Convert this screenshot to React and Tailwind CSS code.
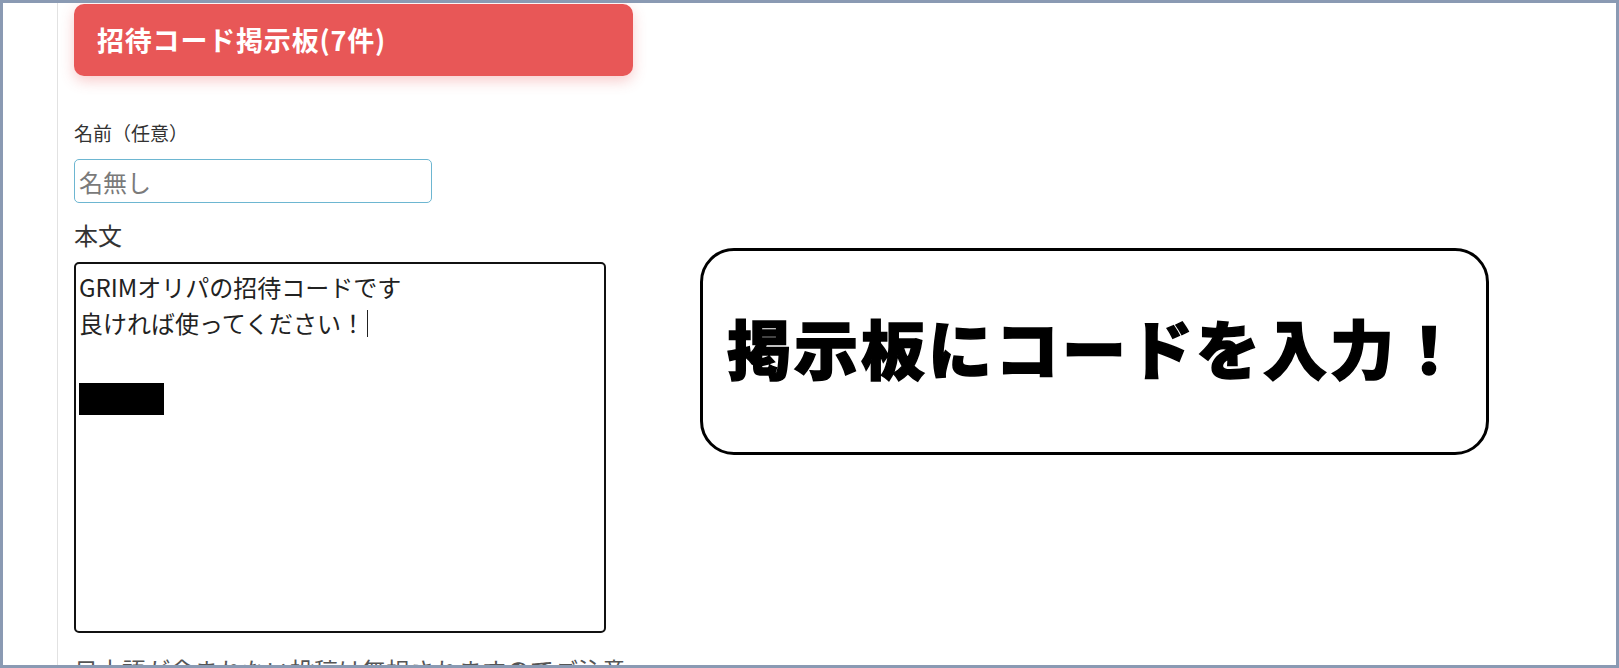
export default function App() {
  const jp = { fontFamily: '"Noto Sans CJK JP", "Noto Sans", sans-serif' }

  return (
    <div
      className="flex h-[668px] w-[1619px] overflow-hidden border-[3px] border-[#8a9ab3] bg-white"
      style={jp}
    >
      {/* left gutter */}
      <div className="w-[55px] shrink-0 border-r border-[#e2e2e2]" />

      {/* form column */}
      <div className="w-[575px] shrink-0 pl-[16px]">
        <div className="mt-[1px] flex h-[72px] w-[559px] items-center rounded-[10px] bg-[#e85757] pl-[23px] shadow-[0_5px_14px_rgba(232,87,87,0.3)]">
          <h2 className="text-[27px] font-bold tracking-[0.03em] text-white">招待コード掲示板(7件)</h2>
        </div>

        <p className="mt-[43px] text-[19px] leading-[27px] text-[#333]">名前（任意）</p>
        <input
          type="text"
          placeholder="名無し"
          className="mt-[13px] block h-[44px] w-[358px] rounded-[5px] border border-[#6db6d1] px-[4px] text-[24px] text-[#333] outline-none placeholder:text-[#7a7a7a]"
        />

        <p className="mt-[14px] text-[24px] leading-[36px] text-[#333]">本文</p>
        <div className="mt-[9px] h-[371px] w-[532px] rounded-[5px] border-2 border-[#111] px-[3px] pt-[5px] text-[24px] leading-[36px] text-[#222]">
          <div>GRIMオリパの招待コードです</div>
          <div className="flex items-center">
            良ければ使ってください！
            <span className="ml-[2px] inline-block h-[27px] w-[1px] bg-[#222]" />
          </div>
          <div className="h-[40px]" />
          <div className="flex h-[36px] items-center">
            <span className="inline-block h-[32px] w-[85px] bg-black" />
          </div>
        </div>

        <p className="mt-[19px] w-[559px] text-[24px] leading-[36px] text-[#555]">
          日本語が含まれない投稿は無視されますのでご注意ください。
        </p>
      </div>

      {/* callout */}
      <div className="ml-[67px] mt-[245px] h-[207px] w-[789px] shrink-0">
        <div className="flex h-full w-full items-center rounded-[34px] border-[3px] border-black pb-[12px] pl-[24px]">
          <span className="text-[64px] font-black leading-none tracking-[3px] text-black [-webkit-text-stroke:1.5px_black]">
            掲示板にコードを入力！
          </span>
        </div>
      </div>
    </div>
  )
}
